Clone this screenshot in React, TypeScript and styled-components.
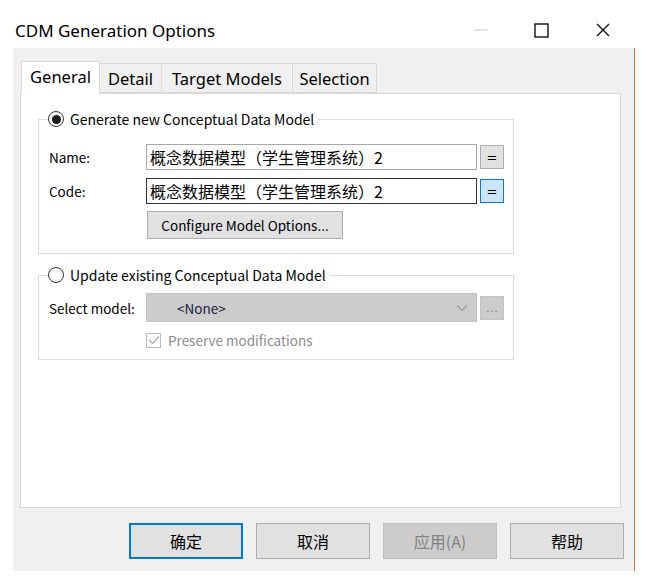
import React from "react";
import styled, { createGlobalStyle } from "styled-components";

const Global = createGlobalStyle`
  html, body { margin: 0; padding: 0; background: #ffffff; }
  body { font-family: "Noto Sans CJK SC", "Noto Sans", sans-serif; color: #000; }
  * { box-sizing: border-box; }
`;

const Page = styled.div`
  width: 654px;
  height: 586px;
  padding-top: 16px;
  background: #fff;
`;

const Window = styled.div`
  width: 635px;
  display: flex;
  flex-direction: column;
  border-right: 1px solid #c8783c;
`;

const TitleBar = styled.div`
  margin-top: -16px;
  padding-top: 16px;
  height: 48px;
  display: flex;
  align-items: center;
  background: #fff;
  padding-left: 15px;
  margin-right: -1px;
`;

const Title = styled.div`
  flex: 1;
  font-family: "Noto Sans", sans-serif;
  font-size: 17px;
  margin-top: -4px;
`;

const Controls = styled.div`
  display: flex;
  align-items: center;
  margin-top: -4px;
  padding-right: 1px;
`;

const Ctl = styled.div<{ $w: number }>`
  width: ${(p) => p.$w}px;
  height: 20px;
  display: flex;
  align-items: center;
  justify-content: center;
`;

const Body = styled.div`
  margin-left: 13px;
  background: #f0f0f0;
  height: 523px;
  padding: 13px 13px 0 7px;
  display: flex;
  flex-direction: column;
`;

const Tabs = styled.div`
  display: flex;
  align-items: flex-end;
  height: 32px;
  padding-left: 1px;
  position: relative;
  z-index: 1;
`;

const Tab = styled.div<{ $active?: boolean; $w: number }>`
  width: ${(p) => p.$w}px;
  height: ${(p) => (p.$active ? 33 : 30)}px;
  margin-bottom: ${(p) => (p.$active ? -1 : 0)}px;
  background: ${(p) => (p.$active ? "#fff" : "#f0f0f0")};
  border: 1px solid #d9d9d9;
  border-bottom: ${(p) => (p.$active ? "none" : "1px solid #d9d9d9")};
  margin-left: ${(p) => (p.$active ? 0 : -1)}px;
  display: flex;
  align-items: center;
  justify-content: center;
  font-family: "Noto Sans", sans-serif;
  font-size: 16.5px;
  padding-bottom: ${(p) => (p.$active ? 4 : 0)}px;
  &:first-child { margin-left: 0; }
`;

const Panel = styled.div`
  width: 601px;
  height: 415px;
  background: #fff;
  border: 1px solid #d9d9d9;
  padding: 16px 0 0 17px;
  display: flex;
  flex-direction: column;
`;

const Group = styled.fieldset<{ $h: number; $mt?: number }>`
  margin: ${(p) => p.$mt ?? 0}px 0 0 0;
  width: 476px;
  height: ${(p) => p.$h}px;
  border: 1px solid #dcdcdc;
  padding: 0 0 0 10px;
`;

const Legend = styled.legend`
  padding: 0 4px 0 0;
  margin-left: -1px;
  display: flex;
  align-items: center;
  gap: 6px;
  font-size: 14px;
  line-height: 18px;
  background: #fff;
`;

const Radio = styled.span<{ $on?: boolean }>`
  width: 16px;
  height: 16px;
  border-radius: 50%;
  border: 1px solid #333;
  display: inline-flex;
  align-items: center;
  justify-content: center;
  background: #fff;
  &::after {
    content: "";
    display: ${(p) => (p.$on ? "block" : "none")};
    width: 9px;
    height: 9px;
    border-radius: 50%;
    background: #1a1a1a;
  }
`;

const Row = styled.div<{ $mt: number }>`
  display: flex;
  align-items: center;
  margin-top: ${(p) => p.$mt}px;
`;

const Label = styled.div`
  width: 97px;
  font-size: 13.5px;
  color: #000;
`;

const Input = styled.div<{ $focus?: boolean }>`
  width: 331px;
  height: 26px;
  border: 1px solid ${(p) => (p.$focus ? "#333333" : "#a8a8a8")};
  display: flex;
  align-items: center;
  padding-left: 3px;
  font-size: 16px;
  white-space: nowrap;
`;

const SmallBtn = styled.div<{ $blue?: boolean; $disabled?: boolean }>`
  width: 24px;
  height: 24px;
  margin-left: 3px;
  border: 1px solid ${(p) => (p.$blue ? "#0078d7" : p.$disabled ? "#c4c4c4" : "#adadad")};
  background: ${(p) => (p.$blue ? "#cce4f7" : p.$disabled ? "#cccccc" : "#e1e1e1")};
  color: ${(p) => (p.$disabled ? "#8a8a8a" : "#000")};
  font-size: 13px;
  display: flex;
  align-items: center;
  justify-content: center;
  font-family: "DejaVu Sans", sans-serif;
`;

const WideBtn = styled.div`
  margin-left: 98px;
  width: 196px;
  height: 28px;
  border: 1px solid #adadad;
  background: #e1e1e1;
  font-size: 13.5px;
  display: flex;
  align-items: center;
  justify-content: center;
`;

const Combo = styled.div`
  width: 331px;
  height: 29px;
  background: #cccccc;
  border: 1px solid #c4c4c4;
  display: flex;
  align-items: center;
  padding: 0 8px 0 30px;
  font-size: 13.5px;
  color: #20203a;
`;

const ComboText = styled.span`
  flex: 1;
`;

const CheckRow = styled.div`
  display: flex;
  align-items: center;
  margin: 8px 0 0 97px;
  gap: 7px;
  color: #8c8c8c;
  font-size: 13.5px;
`;

const CheckBox = styled.span`
  width: 15px;
  height: 15px;
  border: 1px solid #bcbcbc;
  display: inline-flex;
  align-items: center;
  justify-content: center;
`;

const ButtonRow = styled.div`
  display: flex;
  justify-content: flex-end;
  gap: 13px;
  margin-top: 15px;
  margin-right: -3px;
`;

const DlgBtn = styled.div<{ $primary?: boolean; $disabled?: boolean }>`
  width: 114px;
  height: 36px;
  display: flex;
  align-items: center;
  justify-content: center;
  font-size: 16px;
  background: ${(p) => (p.$disabled ? "#cccccc" : "#e1e1e1")};
  border: ${(p) => (p.$primary ? "2px solid #0078d7" : p.$disabled ? "1px solid #bfbfbf" : "1px solid #adadad")};
  color: ${(p) => (p.$disabled ? "#838383" : "#000")};
`;

export default function App() {
  return (
    <Page>
      <Global />
      <Window>
        <TitleBar>
          <Title>CDM Generation Options</Title>
          <Controls>
            <Ctl $w={61}>
              <svg width="14" height="2"><line x1="0" y1="1" x2="14" y2="1" stroke="#c8c8c8" strokeWidth="1" /></svg>
            </Ctl>
            <Ctl $w={61}>
              <svg width="15" height="15"><rect x="1" y="1" width="13" height="13" fill="none" stroke="#111" strokeWidth="1.4" /></svg>
            </Ctl>
            <Ctl $w={62}>
              <svg width="14" height="14"><path d="M1 1 L13 13 M13 1 L1 13" stroke="#111" strokeWidth="1.4" /></svg>
            </Ctl>
          </Controls>
        </TitleBar>
        <Body>
          <Tabs>
            <Tab $active $w={79}>General</Tab>
            <Tab $w={63}>Detail</Tab>
            <Tab $w={132}>Target Models</Tab>
            <Tab $w={85}>Selection</Tab>
          </Tabs>
          <Panel>
            <Group $h={144}>
              <Legend>
                <Radio $on />
                Generate new Conceptual Data Model
              </Legend>
              <Row $mt={16}>
                <Label>Name:</Label>
                <Input>概念数据模型（学生管理系统）2</Input>
                <SmallBtn>=</SmallBtn>
              </Row>
              <Row $mt={8}>
                <Label>Code:</Label>
                <Input $focus>概念数据模型（学生管理系统）2</Input>
                <SmallBtn $blue>=</SmallBtn>
              </Row>
              <Row $mt={7}>
                <WideBtn>Configure Model Options...</WideBtn>
              </Row>
            </Group>
            <Group $h={94} $mt={12}>
              <Legend>
                <Radio />
                Update existing Conceptual Data Model
              </Legend>
              <Row $mt={9}>
                <Label>Select model:</Label>
                <Combo>
                  <ComboText>&lt;None&gt;</ComboText>
                  <svg width="12" height="8" viewBox="0 0 12 8"><path d="M1 1.5 L6 6.5 L11 1.5" fill="none" stroke="#9a9a9a" strokeWidth="1.2" /></svg>
                </Combo>
                <SmallBtn $disabled>...</SmallBtn>
              </Row>
              <CheckRow>
                <CheckBox>
                  <svg width="12" height="10" viewBox="0 0 12 10"><path d="M1 5 L4.5 8.5 L11 1.5" fill="none" stroke="#a8a8a8" strokeWidth="1.2" /></svg>
                </CheckBox>
                Preserve modifications
              </CheckRow>
            </Group>
          </Panel>
          <ButtonRow>
            <DlgBtn $primary>确定</DlgBtn>
            <DlgBtn>取消</DlgBtn>
            <DlgBtn $disabled>应用(A)</DlgBtn>
            <DlgBtn>帮助</DlgBtn>
          </ButtonRow>
        </Body>
      </Window>
    </Page>
  );
}
